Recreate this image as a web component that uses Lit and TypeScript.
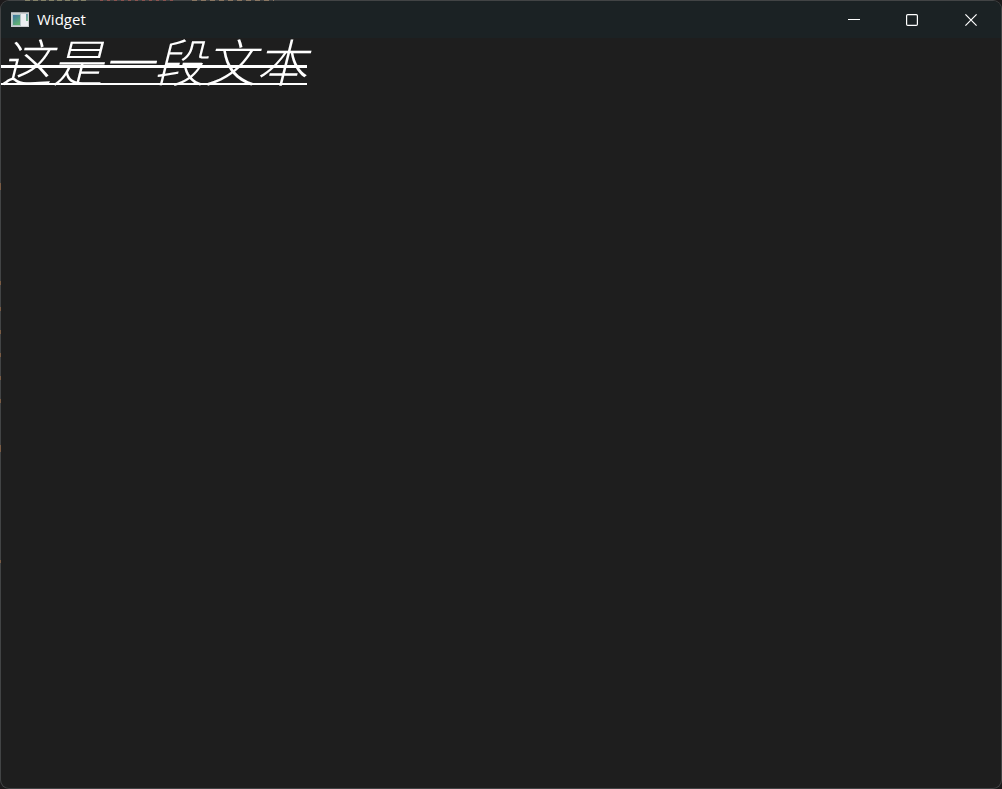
import { LitElement, html, css } from "lit";
import { customElement, property } from "lit/decorators.js";

@customElement("title-bar")
class TitleBar extends LitElement {
  @property() heading = "";

  static styles = css`
    :host {
      display: flex;
      height: 37px;
      background: #1b2224;
      color: #fff;
    }
    .caption {
      flex: 1;
      display: flex;
      align-items: center;
      gap: 8px;
      padding: 0 0 1px 9px;
    }
    h1 {
      margin: 0;
      font: 400 15px/18px "Open Sans", "Noto Sans", sans-serif;
    }
    svg {
      display: block;
    }
    button {
      width: 58px;
      padding: 0;
      border: 0;
      background: none;
      color: inherit;
      display: grid;
      place-items: center;
    }
    .close {
      width: 60px;
    }
  `;

  render() {
    return html`
      <div class="caption">
        <svg width="19" height="16" viewBox="0 0 19 16" aria-hidden="true">
          <defs>
            <linearGradient id="pane" x1="0" y1="0" x2=".5" y2="1">
              <stop offset="0" stop-color="#3f74a6" />
              <stop offset="1" stop-color="#5fb072" />
            </linearGradient>
          </defs>
          <rect x="1" y="1" width="18" height="15" fill="#c9cccf" />
          <rect x="1" y="1" width="18" height="1" fill="#a4a8ab" />
          <rect x="2" y="3" width="16" height="12" fill="#eceef1" />
          <rect x="2" y="3" width="9" height="12" fill="#b4c6c6" />
          <rect x="3" y="4" width="7" height="10" fill="url(#pane)" />
          <rect x="16" y="3" width="2" height="7" fill="url(#pane)" opacity=".8" />
        </svg>
        <h1>${this.heading}</h1>
      </div>
      <button aria-label="Minimize">
        <svg width="12" height="12" viewBox="0 0 12 12"><path d="M0 5.5H12" stroke="#fff" /></svg>
      </button>
      <button aria-label="Maximize">
        <svg width="12" height="12" viewBox="0 0 12 12">
          <rect x=".6" y=".6" width="10.8" height="10.8" rx="1.2" fill="none" stroke="#fff" stroke-width="1.2" />
        </svg>
      </button>
      <button class="close" aria-label="Close">
        <svg width="12" height="12" viewBox="0 0 12 12">
          <path d="M.4.4 11.6 11.6M11.6.4.4 11.6" stroke="#fff" stroke-width="1.2" />
        </svg>
      </button>
    `;
  }
}

@customElement("app-root")
class AppRoot extends LitElement {
  static styles = css`
    :host {
      display: block;
      height: 100vh;
      background: #1c1a1b;
    }
    .window {
      --tan: linear-gradient(#7a5c45, #7a5c45);
      --repeat: repeating-linear-gradient(#7a5c45 0 4px, #424445 4px 23px);
      box-sizing: border-box;
      height: 100%;
      display: flex;
      flex-direction: column;
      border: 1px solid transparent;
      border-radius: 9px;
      overflow: hidden;
      background:
        linear-gradient(#1e1e1e, #1e1e1e) padding-box,
        repeating-linear-gradient(90deg, #85836a 0 5px, #424445 5px 8px) 25px 0 / 64px 1px no-repeat border-box,
        repeating-linear-gradient(90deg, #8a5350 0 3px, #424445 3px 7px) 100px 0 / 74px 1px no-repeat border-box,
        repeating-linear-gradient(90deg, #8a7763 0 5px, #424445 5px 9px) 192px 0 / 82px 1px no-repeat border-box,
        var(--tan) 0 183px / 1px 7px no-repeat border-box,
        var(--repeat) 0 281px / 1px 4px no-repeat border-box,
        var(--repeat) 0 307px / 1px 96px no-repeat border-box,
        var(--tan) 0 445px / 1px 7px no-repeat border-box,
        var(--tan) 0 560px / 1px 3px no-repeat border-box,
        linear-gradient(#424445, #424445) border-box;
    }
    main {
      flex: 1;
    }
    /* The strike and the underline are painted as two full-width rules. */
    .label {
      margin: 0;
      padding-bottom: 2px;
      width: max-content;
      color: #fff;
      font: italic 300 51px/45px "KaiTi", "Noto Sans CJK SC", sans-serif;
      background:
        linear-gradient(#fff, #fff) 0 27px / 100% 3px no-repeat,
        linear-gradient(#fff, #fff) 0 100% / 100% 2px no-repeat;
    }
  `;

  render() {
    return html`
      <div class="window">
        <title-bar heading="Widget"></title-bar>
        <main>
          <p class="label" lang="zh-CN">这是一段文本</p>
        </main>
      </div>
    `;
  }
}
